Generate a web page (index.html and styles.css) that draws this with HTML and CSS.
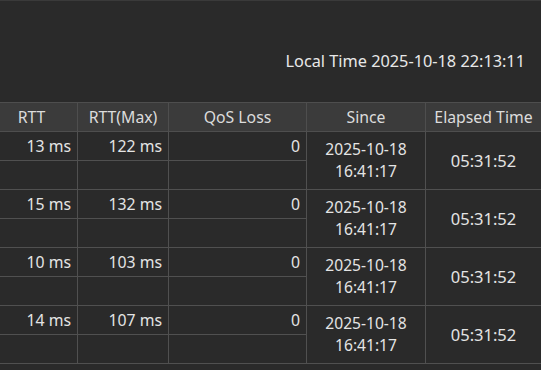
FILE: index.html
```html
<!DOCTYPE html>
<html>
<head>
<meta charset="utf-8">
<link rel="stylesheet" href="styles.css">
</head>
<body>
<div class="page">
  <div class="topbar">
    <span class="clock">Local Time 2025-10-18 22:13:11</span>
  </div>
  <div class="table-wrap">
    <table class="grid">
      <colgroup>
        <col class="c-rtt"><col class="c-max"><col class="c-qos"><col class="c-since"><col class="c-elapsed">
      </colgroup>
      <thead>
        <tr><th>RTT</th><th>RTT(Max)</th><th>QoS Loss</th><th>Since</th><th>Elapsed Time</th></tr>
      </thead>
      <tbody>
        <tr><td class="num">13 ms</td><td class="num">122 ms</td><td class="num">0</td><td class="since" rowspan="2"><div class="ln">2025-10-18</div><div class="ln">16:41:17</div></td><td class="elapsed" rowspan="2">05:31:52</td></tr>
        <tr><td></td><td></td><td></td></tr>
        <tr><td class="num">15 ms</td><td class="num">132 ms</td><td class="num">0</td><td class="since" rowspan="2"><div class="ln">2025-10-18</div><div class="ln">16:41:17</div></td><td class="elapsed" rowspan="2">05:31:52</td></tr>
        <tr><td></td><td></td><td></td></tr>
        <tr><td class="num">10 ms</td><td class="num">103 ms</td><td class="num">0</td><td class="since" rowspan="2"><div class="ln">2025-10-18</div><div class="ln">16:41:17</div></td><td class="elapsed" rowspan="2">05:31:52</td></tr>
        <tr><td></td><td></td><td></td></tr>
        <tr><td class="num">14 ms</td><td class="num">107 ms</td><td class="num">0</td><td class="since" rowspan="2"><div class="ln">2025-10-18</div><div class="ln">16:41:17</div></td><td class="elapsed" rowspan="2">05:31:52</td></tr>
        <tr><td></td><td></td><td></td></tr>
      </tbody>
    </table>
  </div>
</div>
</body>
</html>
```
FILE: styles.css
```css
html, body {
  margin: 0;
  padding: 0;
  background: #2a2a2a;
  overflow: hidden;
}
.page {
  width: 541px;
  height: 370px;
  overflow: hidden;
  background: #2a2a2a;
  border-top: 1px solid #3a3a3a;
  box-sizing: border-box;
  font-family: "Noto Sans", "Open Sans", sans-serif;
  color: #e4e4e4;
}
.topbar {
  height: 101px;
  display: flex;
  align-items: center;
  justify-content: flex-end;
  padding-right: 16px;
  padding-top: 18px;
  box-sizing: border-box;
}
.clock {
  font-size: 16.3px;
  color: #e8e8e8;
}
.table-wrap {
  margin-left: -15px;
}
.grid {
  border-collapse: collapse;
  table-layout: fixed;
  width: 556px;
  font-size: 15.8px;
}
.c-rtt { width: 92px; }
.c-max { width: 91px; }
.c-qos { width: 138px; }
.c-since { width: 119px; }
.c-elapsed { width: 116px; }
.grid th {
  background: #3b3b3b;
  color: #dcdcdc;
  font-weight: normal;
  height: 28px;
  padding: 0;
  border: 1px solid #4e4e4e;
  text-align: center;
  line-height: 18px;
}
.grid td {
  height: 28px;
  padding: 0 6px;
  border: 1px solid #505050;
  line-height: 18px;
}
.grid td.num {
  text-align: right;
  vertical-align: middle;
}
.grid td.since, .grid td.elapsed {
  text-align: center;
  vertical-align: middle;
}
.grid td.elapsed {
  font-size: 16.5px;
}
.grid td.since {
  font-size: 15.6px;
}
.grid td.since .ln {
  height: 21.3px;
  line-height: 21.3px;
}
```
